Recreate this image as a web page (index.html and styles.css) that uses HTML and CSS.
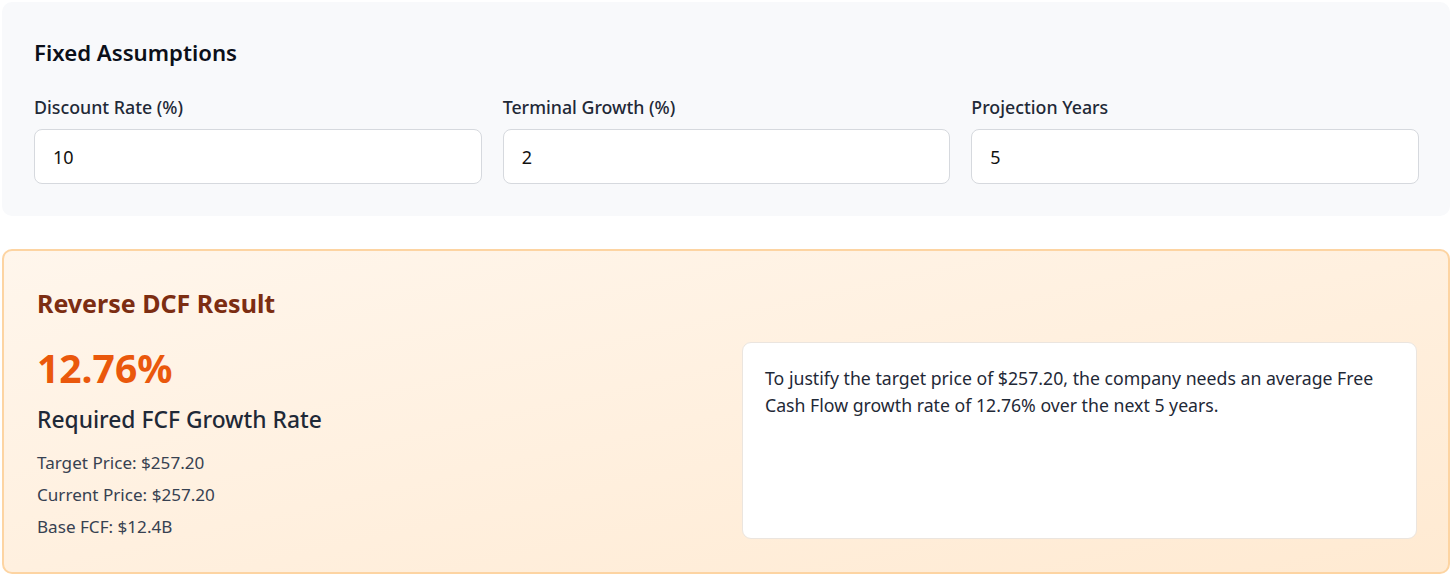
FILE: index.html
```html
<!DOCTYPE html>
<html lang="en">
<head>
<meta charset="utf-8">
<title>Reverse DCF</title>
<link rel="stylesheet" href="styles.css">
</head>
<body>
<div class="page">
  <section class="assumptions">
    <h2 class="assumptions-title">Fixed Assumptions</h2>
    <div class="fields">
      <label class="field">
        <span class="field-label">Discount Rate (%)</span>
        <input class="field-input" type="text" value="10">
      </label>
      <label class="field">
        <span class="field-label">Terminal Growth (%)</span>
        <input class="field-input" type="text" value="2">
      </label>
      <label class="field">
        <span class="field-label">Projection Years</span>
        <input class="field-input" type="text" value="5">
      </label>
    </div>
  </section>

  <section class="result">
    <h2 class="result-title">Reverse DCF Result</h2>
    <div class="result-grid">
      <div class="result-main">
        <div class="result-rate">12.76%</div>
        <div class="result-label">Required FCF Growth Rate</div>
        <div class="result-info">
          <div class="info-line">Target Price: $257.20</div>
          <div class="info-line">Current Price: $257.20</div>
          <div class="info-line">Base FCF: $12.4B</div>
        </div>
      </div>
      <div class="result-note">
        <p class="note-text">To justify the target price of $257.20, the company needs an average Free Cash Flow growth rate of 12.76% over the next 5 years.</p>
      </div>
    </div>
  </section>
</div>
</body>
</html>
```

FILE: styles.css
```css
* { box-sizing: border-box; }

html, body {
  margin: 0;
  padding: 0;
  background: #ffffff;
}

body {
  font-family: "Noto Sans", "Open Sans", "DejaVu Sans", sans-serif;
  color: #1f2937;
}

.page {
  padding: 2px 6px 0 2px;
  display: flex;
  flex-direction: column;
  gap: 33px;
}

.assumptions {
  background: #f8f9fb;
  border-radius: 10px;
  padding: 36px 31px 32px 32px;
}

.assumptions-title {
  margin: 0 0 27px 0;
  font-size: 22.2px;
  line-height: 30px;
  font-weight: 600;
  color: #0b0f19;
}

.fields {
  display: grid;
  grid-template-columns: repeat(3, 1fr);
  gap: 21px;
}

.field {
  display: flex;
  flex-direction: column;
  gap: 10px;
}

.field-label {
  font-size: 17.8px;
  line-height: 24px;
  font-weight: 500;
  color: #1f2937;
}

.field-input {
  height: 55px;
  width: 100%;
  border: 1px solid #d6d9de;
  border-radius: 8px;
  background: #ffffff;
  padding: 0 18px;
  font-family: inherit;
  font-size: 18px;
  color: #111111;
  outline: none;
}

.result {
  border: 2px solid #fdd4a2;
  border-radius: 10px;
  background: linear-gradient(to bottom right, #fff6ec, #ffead2);
  padding: 36px 31px 33px 33px;
}

.result-title {
  margin: 0 0 23px 0;
  font-size: 25px;
  line-height: 32px;
  font-weight: 700;
  color: #7c2d12;
}

.result-grid {
  display: grid;
  grid-template-columns: 1fr 1fr;
  gap: 30px;
}

.result-main {
  display: flex;
  flex-direction: column;
}

.result-rate {
  font-size: 39px;
  line-height: 52px;
  font-weight: 700;
  color: #ea580c;
  margin-bottom: 10px;
}

.result-label {
  font-size: 22.8px;
  line-height: 32px;
  font-weight: 500;
  color: #1f2937;
  margin-bottom: 15px;
}

.result-info {
  display: flex;
  flex-direction: column;
  gap: 8px;
}

.info-line {
  font-size: 17.1px;
  line-height: 24px;
  color: #374151;
}

.result-note {
  background: #ffffff;
  border: 1px solid #ebe5df;
  border-radius: 9px;
  padding: 22px 22px 22px 22px;
}

.note-text {
  margin: 0;
  font-size: 17.7px;
  line-height: 27px;
  color: #1f2937;
}
```
